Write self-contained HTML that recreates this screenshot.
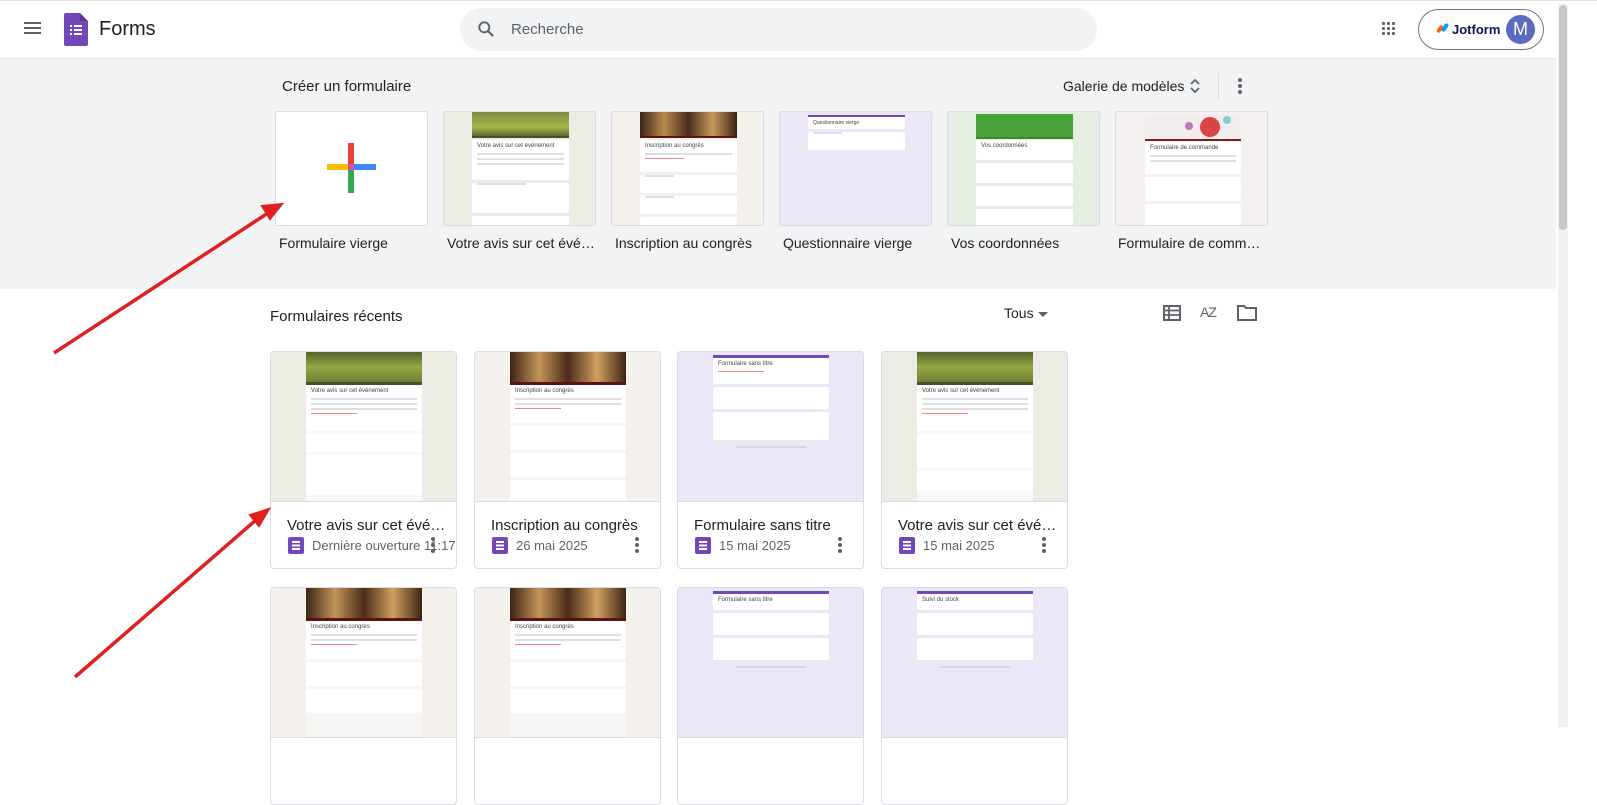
<!DOCTYPE html>
<html><head><meta charset="utf-8"><style>
*{box-sizing:border-box;margin:0;padding:0}
body{width:1597px;height:727px;overflow:hidden;background:#fff;font-family:"Liberation Sans",Arial,sans-serif;position:relative;color:#202124}
.a{position:absolute}
.th{position:absolute;overflow:hidden;border:1px solid #dadce0;border-radius:3px}
.col{position:absolute;top:0;bottom:0}
.blk{background:#fff;border-radius:2px;margin-bottom:3px;position:relative}
.ln{height:2px;background:#ccc;margin:3px 5px;opacity:.6}
.tl{font-size:6px;color:#444;padding:3px 5px 1px;white-space:nowrap;overflow:hidden}
.red{height:1px;background:#e88;width:40%;margin:3px 5px}
.card{position:absolute;width:187px;height:218px;border:1px solid #dadce0;border-radius:4px;overflow:hidden;background:#fff}
.card .tb{position:absolute;left:0;top:0;width:185px;height:150px;border-bottom:1px solid #dadce0;overflow:hidden}
.card .tt{position:absolute;left:16px;top:165px;font-size:15px;color:#202124;white-space:nowrap;width:162px;overflow:hidden;text-overflow:ellipsis}
.card .ic{position:absolute;left:17px;top:185px;width:16px;height:17px;background:#7248b9;border-radius:2px}
.card .ic:before{content:"";position:absolute;left:4px;top:4px;width:8px;height:1.5px;background:#fff;box-shadow:0 3.5px #fff,0 7px #fff}
.card .dt{position:absolute;left:41px;top:186px;font-size:13px;color:#5f6368}
.card .dots{position:absolute;left:160px;top:185px;width:4px;height:4px;border-radius:2px;background:#5f6368;box-shadow:0 6px #5f6368,0 12px #5f6368}
.lbl{position:absolute;top:235px;font-size:14px;color:#202124;white-space:nowrap;width:150px;overflow:hidden;text-overflow:ellipsis}
</style></head><body>
<div class="a" style="left:0;top:0;width:1597px;height:1px;background:#e6e0dc"></div>
<div class="a" style="left:24px;top:22px;width:17px;height:2px;background:#5f6368;box-shadow:0 5px #5f6368,0 10px #5f6368"></div>
<div class="a" style="left:64px;top:13px;width:24px;height:33px;background:#7248b9;border-radius:2px"></div>
<div class="a" style="left:80px;top:13px;width:0;height:0;border-top:8px solid #fff;border-left:8px solid #5a3596"></div>
<div class="a" style="left:70px;top:25px;width:2px;height:2px;background:#fff;box-shadow:0 4px #fff,0 8px #fff"></div>
<div class="a" style="left:74px;top:25px;width:8px;height:2px;background:#fff;box-shadow:0 4px #fff,0 8px #fff"></div>
<div class="a" style="left:99px;top:18px;font-size:20px;color:#202124">Forms</div>
<div class="a" style="left:460px;top:8px;width:637px;height:43px;background:#f1f3f4;border-radius:22px"></div>
<svg class="a" style="left:476px;top:19px" width="20" height="20" viewBox="0 0 24 24"><circle cx="10" cy="10" r="6" fill="none" stroke="#5f6368" stroke-width="2.3"/><path d="M14.5 14.5l6 6" stroke="#5f6368" stroke-width="2.5"/></svg>
<div class="a" style="left:511px;top:21px;font-size:15px;color:#5f6368">Recherche</div>
<div class="a" style="left:1382px;top:22px;width:3px;height:3px;background:#5f6368;border-radius:1px;box-shadow:5px 0 #5f6368,10px 0 #5f6368,0 5px #5f6368,5px 5px #5f6368,10px 5px #5f6368,0 10px #5f6368,5px 10px #5f6368,10px 10px #5f6368"></div>
<div class="a" style="left:1418px;top:9px;width:126px;height:41px;border:1px solid #747775;border-radius:21px"></div>
<div class="a" style="left:1438px;top:25px;width:4px;height:8px;background:#ff6100;transform:rotate(35deg);border-radius:2px"></div>
<div class="a" style="left:1443px;top:23px;width:4px;height:9px;background:#0099ff;transform:rotate(35deg);border-radius:2px"></div>
<div class="a" style="left:1452px;top:22px;font-size:13px;font-weight:bold;color:#0a1551">Jotform</div>
<div class="a" style="left:1506px;top:15px;width:29px;height:29px;border-radius:50%;background:#5c6bc0;color:#fff;font-size:18px;text-align:center;line-height:29px">M</div>
<div class="a" style="left:0;top:58px;width:1556px;height:231px;background:#f1f3f4;border-top:1px solid #e8e8e8"></div>
<div class="a" style="left:1558px;top:4px;width:10px;height:723px;background:#f1f1f1"></div>
<div class="a" style="left:1559px;top:5px;width:8px;height:225px;background:#c8c8c8;border-radius:4px"></div>
<div class="a" style="left:282px;top:78px;font-size:15px;color:#202124">Créer un formulaire</div>
<div class="a" style="left:1063px;top:78px;font-size:14px;color:#202124">Galerie de modèles</div>
<svg class="a" style="left:1188px;top:77px" width="14" height="18" viewBox="0 0 14 18"><path d="M3 7l4-4 4 4M3 11l4 4 4-4" fill="none" stroke="#5f6368" stroke-width="1.8"/></svg>
<div class="a" style="left:1218px;top:73px;width:1px;height:26px;background:#dadce0"></div>
<div class="a" style="left:1238px;top:78px;width:4px;height:4px;border-radius:2px;background:#5f6368;box-shadow:0 6px #5f6368,0 12px #5f6368"></div>

<div class="th" style="left:275px;top:111px;width:153px;height:115px;background:#fff">
 <div class="a" style="left:72px;top:31px;width:6px;height:22px;background:#ea4335"></div>
 <div class="a" style="left:51px;top:52px;width:21px;height:6px;background:#fbbc04"></div>
 <div class="a" style="left:72px;top:58px;width:6px;height:23px;background:#34a853"></div>
 <div class="a" style="left:78px;top:52px;width:22px;height:6px;background:#4285f4"></div>
 <div class="a" style="left:72px;top:52px;width:6px;height:6px;background:#c5a"></div>
</div>
<div class="lbl" style="left:279px">Formulaire vierge</div>

<div class="th" style="left:443px;top:111px;width:153px;height:115px;background:#ecebe4">
 <div class="col" style="left:28px;width:97px">
  <div style="height:24px;background:linear-gradient(#7a8a40,#a6b850 60%,#5d6b2b)"></div><div style="height:2px;background:#4a4f2a;margin-bottom:2px"></div>
  <div class="blk" style="height:40px"><div class="tl">Votre avis sur cet événement</div><div class="ln"></div><div class="ln"></div><div class="ln"></div></div>
  <div class="blk" style="height:30px"><div class="ln" style="width:50%"></div></div>
  <div class="blk" style="height:20px"></div>
 </div></div>
<div class="lbl" style="left:447px">Votre avis sur cet événement</div>

<div class="th" style="left:611px;top:111px;width:153px;height:115px;background:#f4f1ed">
 <div class="col" style="left:28px;width:97px">
  <div style="height:24px;background:linear-gradient(90deg,#3b2414,#b88a52,#4a2c18,#c79a60,#3b2414)"></div><div style="height:2px;background:#5a1414;margin-bottom:2px"></div>
  <div class="blk" style="height:32px"><div class="tl">Inscription au congrès</div><div class="ln"></div><div class="red"></div></div>
  <div class="blk" style="height:18px"><div class="ln" style="width:30%"></div></div>
  <div class="blk" style="height:18px"><div class="ln" style="width:30%"></div></div>
  <div class="blk" style="height:18px"></div>
 </div></div>
<div class="lbl" style="left:615px">Inscription au congrès</div>

<div class="th" style="left:779px;top:111px;width:153px;height:115px;background:#ebe7f6">
 <div class="col" style="left:28px;width:97px">
  <div style="height:2px;background:#7248b9;margin-top:3px"></div>
  <div class="blk" style="height:12px"><div class="tl" style="font-size:5px">Questionnaire vierge</div></div>
  <div class="blk" style="height:18px"><div class="ln" style="width:30%"></div></div>
 </div></div>
<div class="lbl" style="left:783px">Questionnaire vierge</div>

<div class="th" style="left:947px;top:111px;width:153px;height:115px;background:#e4efe1">
 <div class="col" style="left:28px;width:97px">
  <div style="height:23px;background:#4aa33a;margin-top:2px"></div><div style="height:2px;background:#3d8a2e;margin-bottom:1px"></div>
  <div class="blk" style="height:20px"><div class="tl">Vos coordonnées</div></div>
  <div class="blk" style="height:20px"></div><div class="blk" style="height:20px"></div><div class="blk" style="height:20px"></div>
 </div></div>
<div class="lbl" style="left:951px">Vos coordonnées</div>

<div class="th" style="left:1115px;top:111px;width:153px;height:115px;background:#f6f1f1">
 <div class="col" style="left:29px;width:96px">
  <div style="height:25px;background:#f3ecec;margin-top:2px;position:relative"><div class="a" style="left:55px;top:3px;width:20px;height:20px;border-radius:50%;background:#d94444"></div><div class="a" style="left:40px;top:8px;width:8px;height:8px;border-radius:50%;background:#b87ab8"></div><div class="a" style="left:78px;top:2px;width:8px;height:8px;border-radius:50%;background:#8cc"></div></div>
  <div style="height:2px;background:#7a2020;margin-bottom:1px"></div>
  <div class="blk" style="height:32px"><div class="tl">Formulaire de commande</div><div class="ln"></div><div class="ln"></div></div>
  <div class="blk" style="height:24px"></div><div class="blk" style="height:24px"></div>
 </div></div>
<div class="lbl" style="left:1118px">Formulaire de commande</div>

<div class="a" style="left:270px;top:308px;font-size:15px;color:#202124">Formulaires récents</div>
<div class="a" style="left:1004px;top:305px;font-size:14px;color:#202124">Tous</div>
<div class="a" style="left:1038px;top:312px;width:0;height:0;border-left:5px solid transparent;border-right:5px solid transparent;border-top:5px solid #5f6368"></div>
<svg class="a" style="left:1163px;top:305px" width="18" height="16" viewBox="0 0 18 16"><rect x="1" y="1" width="16" height="14" fill="none" stroke="#5f6368" stroke-width="2"/><path d="M1 5.5h16M1 10h16M6 1v14" stroke="#5f6368" stroke-width="1.8"/></svg>
<div class="a" style="left:1200px;top:304px;font-size:14px;color:#5f6368;letter-spacing:-1px">AZ</div>
<svg class="a" style="left:1237px;top:304px" width="20" height="17" viewBox="0 0 20 17"><path d="M1 2h6l2 2h10v12H1z" fill="none" stroke="#5f6368" stroke-width="2"/></svg>

<div class="card" style="left:270px;top:351px"><div class="tb" style="background:#ecebe4"><div class="col" style="left:35px;width:116px;background:#f8f8f8"><div style="height:30px;background:linear-gradient(#55622b,#93a844 50%,#6f7f33)"></div><div style="height:3px;background:#4a4f2a"></div><div class="blk" style="height:46px"><div class="tl">Votre avis sur cet événement</div><div class="ln"></div><div class="ln"></div><div class="ln"></div><div class="red"></div></div><div class="blk" style="height:18px"></div><div class="blk" style="height:40px"></div></div></div>
<div class="tt">Votre avis sur cet événement</div><div class="ic"></div><div class="dt">Dernière ouverture 11:17</div><div class="dots"></div></div>

<div class="card" style="left:474px;top:351px"><div class="tb" style="background:#f4f1ed"><div class="col" style="left:35px;width:116px;background:#f8f6f4"><div style="height:30px;background:linear-gradient(90deg,#3b2414,#c29458,#4a2c18,#d0a060,#3b2414)"></div><div style="height:3px;background:#5a1414"></div><div class="blk" style="height:38px"><div class="tl">Inscription au congrès</div><div class="ln"></div><div class="ln"></div><div class="red"></div></div><div class="blk" style="height:24px"></div><div class="blk" style="height:24px"></div><div class="blk" style="height:20px"></div></div></div>
<div class="tt">Inscription au congrès</div><div class="ic"></div><div class="dt">26 mai 2025</div><div class="dots"></div></div>

<div class="card" style="left:677px;top:351px"><div class="tb" style="background:#ebe7f6"><div class="col" style="left:35px;width:116px"><div style="height:3px;background:#7248b9;margin-top:3px"></div><div class="blk" style="height:26px"><div class="tl">Formulaire sans titre</div><div class="red"></div></div><div class="blk" style="height:22px"></div><div class="blk" style="height:28px"></div><div class="ln" style="width:60%;margin:6px auto"></div></div></div>
<div class="tt">Formulaire sans titre</div><div class="ic"></div><div class="dt">15 mai 2025</div><div class="dots"></div></div>

<div class="card" style="left:881px;top:351px"><div class="tb" style="background:#ecebe4"><div class="col" style="left:35px;width:116px;background:#f8f8f8"><div style="height:30px;background:linear-gradient(#55622b,#93a844 50%,#6f7f33)"></div><div style="height:3px;background:#4a4f2a"></div><div class="blk" style="height:46px"><div class="tl">Votre avis sur cet événement</div><div class="ln"></div><div class="ln"></div><div class="ln"></div><div class="red"></div></div><div class="blk" style="height:34px"></div><div class="blk" style="height:20px"></div></div></div>
<div class="tt">Votre avis sur cet événement</div><div class="ic"></div><div class="dt">15 mai 2025</div><div class="dots"></div></div>

<div class="card" style="left:270px;top:587px"><div class="tb" style="background:#f4f1ed"><div class="col" style="left:35px;width:116px;background:#f8f6f4"><div style="height:30px;background:linear-gradient(90deg,#3b2414,#c29458,#4a2c18,#d0a060,#3b2414)"></div><div style="height:3px;background:#5a1414"></div><div class="blk" style="height:38px"><div class="tl">Inscription au congrès</div><div class="ln"></div><div class="ln"></div><div class="red"></div></div><div class="blk" style="height:24px"></div><div class="blk" style="height:24px"></div></div></div></div>
<div class="card" style="left:474px;top:587px"><div class="tb" style="background:#f4f1ed"><div class="col" style="left:35px;width:116px;background:#f8f6f4"><div style="height:30px;background:linear-gradient(90deg,#3b2414,#c29458,#4a2c18,#d0a060,#3b2414)"></div><div style="height:3px;background:#5a1414"></div><div class="blk" style="height:38px"><div class="tl">Inscription au congrès</div><div class="ln"></div><div class="ln"></div><div class="red"></div></div><div class="blk" style="height:24px"></div><div class="blk" style="height:24px"></div></div></div></div>
<div class="card" style="left:677px;top:587px"><div class="tb" style="background:#ebe7f6"><div class="col" style="left:35px;width:116px"><div style="height:3px;background:#7248b9;margin-top:3px"></div><div class="blk" style="height:16px"><div class="tl">Formulaire sans titre</div></div><div class="blk" style="height:22px"></div><div class="blk" style="height:22px"></div><div class="ln" style="width:60%;margin:6px auto"></div></div></div></div>
<div class="card" style="left:881px;top:587px"><div class="tb" style="background:#ebe7f6"><div class="col" style="left:35px;width:116px"><div style="height:3px;background:#7248b9;margin-top:3px"></div><div class="blk" style="height:16px"><div class="tl">Suivi du stock</div></div><div class="blk" style="height:22px"></div><div class="blk" style="height:22px"></div><div class="ln" style="width:60%;margin:6px auto"></div></div></div></div>

<svg class="a" style="left:0;top:0" width="1597" height="727"><g stroke="#e02020" stroke-width="3.5" fill="#e02020"><line x1="54" y1="353" x2="268" y2="213"/><polygon points="282,204 262,206 270,219" stroke-width="2"/><line x1="75" y1="677" x2="256" y2="520"/><polygon points="269,509 250,515 259,526" stroke-width="2"/></g></svg>
</body></html>
